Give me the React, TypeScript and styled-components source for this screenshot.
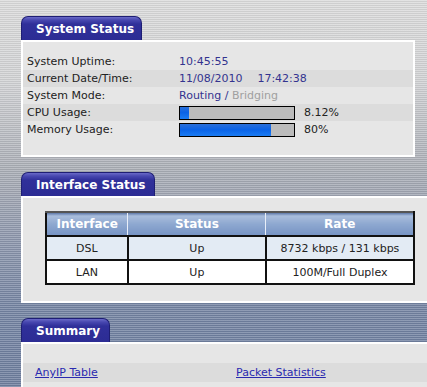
import React from 'react';
import styled, { createGlobalStyle } from 'styled-components';

const GlobalStyle = createGlobalStyle`
  html, body {
    margin: 0;
    padding: 0;
    width: 427px;
    height: 387px;
    overflow: hidden;
  }
  body {
    font-family: "DejaVu Sans", Verdana, sans-serif;
    font-size: 11px;
    color: #222;
    background:
      repeating-linear-gradient(to bottom, rgba(255,255,255,0.2) 0 1px, rgba(0,0,0,0.06) 1px 2px),
      linear-gradient(to bottom, #dcdcdc 0, #d2d3d5 80px, #aaaeb6 170px, #8c96ac 240px, #7383a2 310px, #6e7e9e 387px);
  }
`;

const Page = styled.div`
  padding: 16px 0 0 21px;
  display: flex;
  flex-direction: column;
  gap: 15px;
`;

const Section = styled.div`
  display: flex;
  flex-direction: column;
  align-items: flex-start;
`;

const Tab = styled.div<{ $width: number }>`
  box-sizing: border-box;
  width: ${p => p.$width}px;
  height: 24px;
  padding: 5px 0 0 14px;
  border-radius: 7px 7px 0 0;
  border: 1px solid #1e1e74;
  border-bottom: none;
  background: linear-gradient(to bottom, #6a6ac8 0, #4848b0 3px, #30309a 7px, #2c2c94 100%);
  color: #fff;
  font-weight: bold;
  font-size: 12px;
  line-height: 14px;
  white-space: nowrap;
`;

const Panel = styled.div<{ $width: number; $pad: string }>`
  box-sizing: border-box;
  width: ${p => p.$width}px;
  border: 2px solid #fff;
  background: #e6e6e6;
  padding: ${p => p.$pad};
`;

const InfoRow = styled.div<{ $alt?: boolean }>`
  display: grid;
  grid-template-columns: 152px 1fr;
  align-items: center;
  height: 17px;
  padding-left: 4px;
  background: ${p => (p.$alt ? '#dcdcdc' : 'transparent')};
`;

const Label = styled.span`
  color: #222;
`;

const Value = styled.span`
  color: #33338f;
  white-space: pre;
  display: flex;
  align-items: center;
`;

const Time = styled.span`
  margin-left: 15px;
`;

const Muted = styled.span`
  color: #a0a0a0;
`;

const Bar = styled.div`
  box-sizing: border-box;
  width: 116px;
  height: 14px;
  border: 1px solid #000;
  background: #bcbcbc;
`;

const Fill = styled.div`
  height: 100%;
  background: linear-gradient(to bottom, #2a6fd8 0, #0a62e6 45%, #1a7cf4 100%);
`;

const Percent = styled.span`
  margin-left: 9px;
  color: #222;
`;

const Table = styled.table`
  border-collapse: collapse;
  width: 370px;
  font-size: 11px;
`;

const HeadCell = styled.th<{ $w: number }>`
  box-sizing: border-box;
  width: ${p => p.$w}px;
  height: 24px;
  padding: 0;
  color: #fff;
  font-size: 12px;
  font-weight: bold;
  background: linear-gradient(to bottom, #5e78a8 0, #a9bddc 3px, #8ea8d0 50%, #7794c4 100%);
  border-top: 2px solid #555;
  border-left: 1px solid #e8eef8;
  &:first-child { border-left: 2px solid #111; }
  &:last-child { border-right: 2px solid #111; }
`;

const Cell = styled.td`
  box-sizing: border-box;
  height: 24px;
  padding: 0;
  text-align: center;
  color: #222;
  border: 2px solid #111;
`;

const BodyRow = styled.tr<{ $alt?: boolean }>`
  background: ${p => (p.$alt ? '#e3ebf4' : '#fff')};
`;

const LinkRow = styled.div`
  display: grid;
  grid-template-columns: 201px auto;
  align-items: center;
  height: 19px;
  padding-left: 12px;
  background: #dcdcdc;
`;

const Link = styled.a`
  color: #2a2ab0;
  text-decoration: underline;
  cursor: pointer;
`;

const usage = [
  { label: 'CPU Usage:', value: 8.12, text: '8.12%' },
  { label: 'Memory Usage:', value: 80, text: '80%' },
];

const interfaces = [
  { name: 'DSL', status: 'Up', rate: '8732 kbps / 131 kbps' },
  { name: 'LAN', status: 'Up', rate: '100M/Full Duplex' },
];

export default function App() {
  return (
    <>
      <GlobalStyle />
      <Page>
        <Section>
          <Tab $width={121}>System Status</Tab>
          <Panel $width={394} $pad="11px 0 17px 0">
            <InfoRow>
              <Label>System Uptime:</Label>
              <Value>10:45:55</Value>
            </InfoRow>
            <InfoRow $alt>
              <Label>Current Date/Time:</Label>
              <Value>11/08/2010<Time>17:42:38</Time></Value>
            </InfoRow>
            <InfoRow>
              <Label>System Mode:</Label>
              <Value>Routing / <Muted>Bridging</Muted></Value>
            </InfoRow>
            {usage.map((u, i) => (
              <InfoRow key={u.label} $alt={i === 0}>
                <Label>{u.label}</Label>
                <Value>
                  <Bar>
                    <Fill style={{ width: `${u.value}%` }} />
                  </Bar>
                  <Percent>{u.text}</Percent>
                </Value>
              </InfoRow>
            ))}
          </Panel>
        </Section>

        <Section>
          <Tab $width={134}>Interface Status</Tab>
          <Panel $width={420} $pad="13px 0 16px 22px">
            <Table>
              <thead>
                <tr>
                  <HeadCell $w={82}>Interface</HeadCell>
                  <HeadCell $w={139}>Status</HeadCell>
                  <HeadCell $w={149}>Rate</HeadCell>
                </tr>
              </thead>
              <tbody>
                {interfaces.map((row, i) => (
                  <BodyRow key={row.name} $alt={i === 0}>
                    <Cell>{row.name}</Cell>
                    <Cell>{row.status}</Cell>
                    <Cell>{row.rate}</Cell>
                  </BodyRow>
                ))}
              </tbody>
            </Table>
          </Panel>
        </Section>

        <Section>
          <Tab $width={89}>Summary</Tab>
          <Panel $width={420} $pad="19px 0 20px 0">
            <LinkRow>
              <Link>AnyIP Table</Link>
              <Link>Packet Statistics</Link>
            </LinkRow>
          </Panel>
        </Section>
      </Page>
    </>
  );
}
